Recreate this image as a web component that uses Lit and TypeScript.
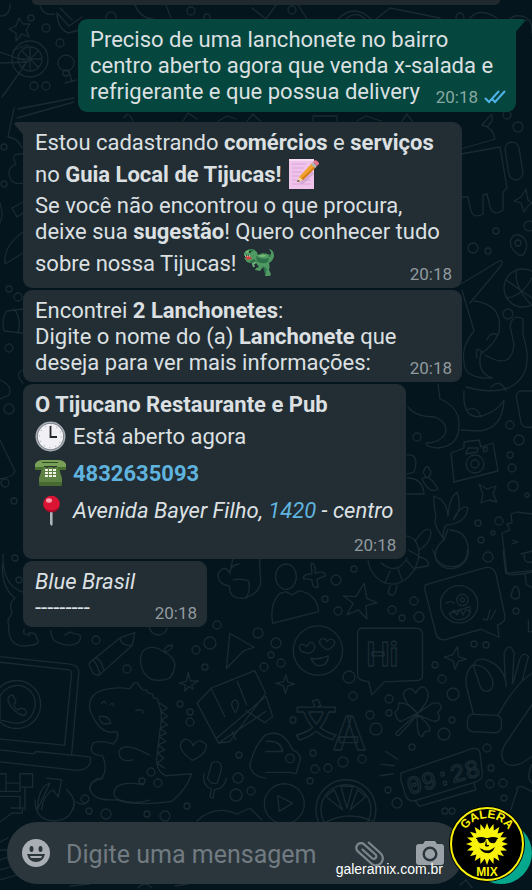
import { LitElement, html, css, svg } from "lit";
import { customElement } from "lit/decorators.js";

const memo = svg`<svg class="emoji" viewBox="0 0 31 31" role="img" aria-label="memo">
  <path fill="#f0c3ea" d="M1 1H26V31H1Z"/><path fill="#f8dcf5" d="M1 1H26V3H1Z"/>
  <path stroke="#d9a5da" stroke-width="1" d="M4 6H18M4 10H16M4 14H14M4 18H11M4 22H23M4 26H23" fill="none"/>
  <path fill="#ba8fbc" d="M11 25L24 13L26 16L15 26Z" opacity=".5"/>
  <path fill="#f0a02c" d="M11 19L24 5L28 9L15 22L10 24Z"/><path fill="#d37a15" d="M13 21L27 8L28 9L15 22Z"/>
  <path fill="#f5d7a8" d="M11 19L15 22L9 24Z"/><path fill="#3b2d28" d="M10 22L12 23L9 24Z"/>
  <path fill="#aeb4bd" d="M23 6L25 4L29 8L27 10Z"/><path fill="#e8738c" d="M25 4L27 2Q29 2 31 5L31 6L29 8Z"/></svg>`;

const dino = svg`<svg class="emoji" viewBox="0 0 31 31" role="img" aria-label="dinosaur">
  <path fill="#4f9a62" d="M1 6Q4 2 9 2Q14 3 15 8Q19 5 24 7Q29 9 28 5L26 2Q31 3 31 9Q30 14 26 16Q27 20 26 23L28 27L27 29H22L23 23L20 20L17 24L12 23L13 21L16 20L13 16Q8 17 4 15L1 11L7 10L5 8L1 9Z"/>
  <path fill="#2d7148" d="M13 9Q18 13 26 11L25 15Q19 18 14 14ZM20 19L24 22L22 27L21 24ZM6 3L9 2L11 4L8 5ZM6 15L11 12L14 15L9 16Z"/>
  <path fill="#7dbb7a" d="M15 9Q19 6 24 9L19 10ZM2 5L6 3L5 6Z"/>
  <path fill="#c8463f" d="M2 9L7 9L9 12L4 13Z"/><path stroke="#f3eee0" stroke-width="1" stroke-dasharray="1 1" d="M2 9H7" fill="none"/>
  <circle cx="7" cy="5" r="1" fill="#1c251d"/>
  <path stroke="#6fb07b" stroke-width="2" fill="none" d="M13 15L10 17L11 20"/>
  <path fill="#1f5c3a" d="M17 8l1-2 1 1zM21 7l2-2 1 2zM25 9l3-1-1 2z"/></svg>`;

const clock = svg`<svg class="emoji" viewBox="0 0 31 31" role="img" aria-label="clock">
  <circle cx="15.500" cy="15.500" r="15" fill="#a9afb6"/><circle cx="15.500" cy="15.500" r="13.500" fill="#75797f"/>
  <circle cx="15.500" cy="15.500" r="12.700" fill="#f0f0f5"/>
  <circle cx="15.500" cy="15.500" r="11" fill="none" stroke="#b9bac4" stroke-width="1.500" stroke-dasharray="1 4.760"/>
  <path d="M15.500 5V16H22" fill="none" stroke="#23262b" stroke-width="1.800"/></svg>`;

const phone = svg`<svg class="emoji" viewBox="0 0 31 31" role="img" aria-label="telephone">
  <path fill="#5d8142" d="M7 9H24Q25 15 27 20V26Q27 28 25 28H6Q4 28 4 26V20Q6 15 7 9Z"/>
  <path fill="#476a32" d="M4 24H27V26Q27 28 25 28H6Q4 28 4 26Z"/>
  <path fill="#78a057" d="M0 10V6Q2 2 8 2H23Q29 2 31 6V10Q31 12 29 12H23Q22 11 22 8H9Q9 11 8 12H2Q0 12 0 10Z"/>
  <path fill="#49702f" d="M0 9H9L8 12H2Q0 12 0 10ZM22 9H31V10Q31 12 29 12H23Z"/>
  <path fill="#314c25" d="M7 4H23V5H7ZM11 8H13V10H11ZM18 8H20V10H18Z"/>
  <path fill="#f0f2e4" d="M10 11h3v2h-3zM14 11h3v2h-3zM18 11h3v2h-3zM10 14h3v2h-3zM14 14h3v2h-3zM18 14h3v2h-3zM10 17h3v2h-3zM14 17h3v2h-3zM18 17h3v2h-3z"/></svg>`;

const pin = svg`<svg class="emoji" viewBox="0 0 31 31" role="img" aria-label="pin">
  <path fill="#aeb5bb" d="M15 15H18V29L16.500 31L15 29Z"/><path fill="#747b80" d="M17 15H18V29L17 30Z"/>
  <circle cx="16.500" cy="9" r="8.300" fill="#dc1433"/><path fill="#a50c27" d="M9 12Q16 19 24 12Q22 17.300 16.500 17.300Q11 17.300 9 12Z"/>
  <ellipse cx="14" cy="5.500" rx="3" ry="2.200" fill="#ff9cab"/></svg>`;

/* Rings and bubbles scattered between the larger doodles: x, y, radius. */
const rings: number[][] = [
  [31, 18, 3], [46, 28, 4], [60, 43, 4], [34, 86, 4], [46, 86, 4], [66, 73, 3], [111, 17, 5], [191, 11, 4], [207, 17, 3], [292, 10, 4], [460, 17, 4],
  [4, 147, 3], [4, 184, 3], [518, 127, 5], [507, 115, 4], [496, 231, 3], [473, 248, 5], [488, 251, 3], [529, 226, 5], [508, 314, 5],
  [9, 289, 3], [18, 297, 4], [9, 348, 4], [9, 409, 5], [5, 483, 4], [14, 501, 3], [15, 558, 3], [19, 580, 3],
  [417, 437, 4], [510, 425, 4], [519, 440, 5], [510, 455, 3], [512, 468, 4], [513, 486, 5], [527, 495, 2], [478, 523, 3], [499, 521, 4], [493, 533, 2], [481, 540, 3], [488, 557, 5],
  [354, 569, 3], [336, 580, 5], [325, 599, 3], [338, 611, 4], [414, 601, 4], [392, 610, 4], [402, 618, 3], [419, 617, 5], [516, 611, 3],
  [276, 643, 5], [271, 655, 3], [281, 663, 4], [474, 644, 3], [486, 645, 3], [435, 665, 3], [442, 679, 4], [453, 694, 6], [349, 677, 6], [353, 696, 4],
  [389, 699, 4], [389, 713, 3], [370, 715, 4], [376, 729, 6], [444, 734, 6], [293, 720, 3], [452, 720, 3], [412, 747, 3], [487, 748, 4],
  [313, 753, 3], [315, 769, 4], [328, 768, 4], [343, 762, 5], [362, 759, 4], [310, 781, 3], [397, 803, 5], [388, 790, 3], [491, 768, 3], [490, 784, 4], [503, 783, 4], [504, 798, 3],
  [96, 640, 4], [127, 669, 4], [217, 625, 4], [210, 643, 6], [196, 650, 4], [258, 633, 5], [205, 667, 3], [264, 667, 4],
  [180, 704, 3], [190, 712, 3], [190, 722, 4], [239, 755, 3], [238, 778, 5], [236, 795, 6], [251, 791, 4], [85, 799, 4], [187, 806, 3], [142, 781, 3], [151, 772, 4], [158, 783, 4],
  [89, 811, 3], [106, 814, 5], [147, 814, 3], [165, 816, 5], [445, 811, 3], [452, 811, 3],
];

const doodles = svg`<svg class="doodles" viewBox="0 0 532 890" preserveAspectRatio="xMidYMin slice" aria-hidden="true">
  ${rings.map(([x, y, r]) => svg`<circle cx=${x} cy=${y} r=${r}/>`)}
  <!-- upper left: star, wheel, cup, lollipop -->
  <path d="M19 18L23 24L30 24L26 30L29 37L22 34L16 41L16 33L9 29L16 26ZM57 13L69 26L82 17M60 8L72 20M57 13Q57 28 68 33L80 30M0 52L28 62L0 63M25 65L2 97M13 50L28 45"/>
  <circle cx="30" cy="59" r="18"/><circle cx="30" cy="59" r="12"/><path d="M30 48V70M19 59H41M22 51L38 67M38 51L22 67"/>
  <circle cx="66" cy="63" r="8"/><path d="M69 71L72 82M65 83L76 80M0 16Q10 16 10 4M40 6Q44 16 54 14M18 109L74 98M17 118L74 102"/>
  <path d="M14 108L8 137Q18 138 22 148M23 154Q9 153 16 164Q5 169 11 180Q15 185 23 183M23 202L12 208L17 217L23 213M0 223Q4 215 0 203M23 232Q3 246 5 264L23 253"/>
  <path d="M23 309L7 311Q1 318 4 331L23 333M14 309Q22 319 18 333M0 380Q13 385 9 395L0 399M0 440L15 471Q14 477 0 479M23 370Q14 374 23 383M3 554Q2 586 23 592"/>
  <!-- top edge -->
  <path d="M135 5Q140 18 153 19M164 0L171 18M252 8L266 19L276 5M298 5L307 19M338 19Q354 3 371 19M346 19Q356 10 365 19M376 19L390 8L440 18M470 18Q480 7 497 18M521 24Q532 12 532 33M510 19Q516 13 527 18"/>
  <path d="M124 118Q128 110 133 121M183 121L188 113L197 119M218 121L227 116L236 119M247 121L253 114L260 121M313 121V116H337V121M357 121L366 116L381 121M402 121L407 114L412 121"/>
  <!-- android, octopus, basketball, map pin -->
  <path d="M461 149L495 139Q493 127 482 125M482 125Q488 118 490 116Q493 112 492 121L487 127M461 154L500 147L507 188L503 192L503 210Q494 217 490 207L487 194L483 195L483 214Q472 220 470 207L468 197H461"/>
  <rect x="507" y="142" width="14" height="38" rx="7" transform="rotate(-9 514 161)"/>
  <path d="M526 189L528 200L532 203L528 206L524 212L521 203L514 201L521 197ZM519 255Q508 247 511 239Q516 231 524 238Q530 246 523 255Z"/>
  <circle cx="518" cy="243" r="3"/><circle cx="523" cy="288" r="19"/><path d="M506 280L532 298M507 298Q522 296 532 278M516 270Q515 290 532 305"/>
  <path d="M461 284L499 261Q505 259 500 267L470 303M462 290L474 331Q461 346 464 362Q464 379 491 378M474 301Q503 304 499 332Q493 347 481 353Q476 373 493 378M485 355Q512 371 514 344L510 326Q513 313 523 319V335Q535 372 512 386Q495 395 466 387M464 391Q462 420 482 416Q499 410 504 400Q503 428 480 431L461 430M491 387Q500 378 506 391M466 410Q477 405 481 417M487 340Q490 331 498 335M483 353Q474 344 477 358"/>
  <path d="M408 407Q416 417 435 417Q449 423 445 434Q440 443 426 443Q425 447 438 448Q460 446 459 424Q459 407 440 399L438 384M407 455Q420 454 414 472L407 474M407 478Q423 478 424 494H407"/>
  <path d="M532 391H520Q515 393 517 400L521 423Q524 429 532 427M423 473Q427 461 431 472Q428 482 424 474M422 479Q429 473 438 489Q430 495 422 479"/>
  <path d="M451 453L464 448L464 442L479 440L481 447L493 443L498 471L454 482Z"/><circle cx="475" cy="464" r="9"/><circle cx="475" cy="464" r="4"/><path d="M466 454L468 448L478 448L477 452ZM483 448L487 447V451L484 452Z"/>
  <path d="M479 484L487 489L496 486L493 494L497 502L489 500L481 503L483 494Z"/>
  <path d="M444 539Q432 523 436 518Q433 500 434 496Q447 500 448 516Q449 498 457 492Q463 509 453 520Q462 503 468 508Q466 524 446 525M443 539Q443 529 446 525M448 529L444 540Q433 548 436 560Q443 571 455 568Q470 563 468 547Q466 531 450 530"/>
  <path d="M532 514L517 512L511 514L512 523L507 524L510 530L502 533L507 574Q512 576 532 572M512 540L518 542L512 544M521 554L532 551M524 555Q524 564 532 562"/>
  <path d="M368 560Q370 576 385 583Q402 588 414 570Q424 552 414 539L407 536M381 563Q397 576 407 558M385 583L390 571M402 580L398 569M415 570L407 561M419 556L408 550M390 586L388 593Q395 600 397 585M416 540Q427 524 431 532Q431 543 419 550M419 557Q430 559 428 566L415 568"/>
  <!-- lower half, left -->
  <g transform="translate(0 550) scale(.333)" stroke-width="4">
    <path d="M8 40Q2 110 45 145Q24 160 36 190L24 210L27 248Q35 298 95 286Q125 280 110 265Q110 245 85 250M73 238Q65 255 90 256M152 240Q155 275 175 278Q215 295 238 275Q250 250 222 252Q212 240 195 256"/>
    <path d="M270 350Q265 340 272 336L360 264L405 248L397 286L302 372Q290 380 278 368ZM360 264Q365 290 397 286M288 325Q300 325 312 360M280 332Q290 340 300 370"/>
    <path d="M448 230Q450 250 475 256Q500 250 502 235M490 305Q455 280 428 305Q415 330 430 365Q455 405 510 385Q535 350 518 325Q505 310 490 305ZM493 305Q495 285 518 286Q515 305 493 305Z"/>
    <path d="M565 368L572 394L596 393L576 406L580 418L567 410L555 424L556 405L538 400L560 394ZM690 250L763 292L730 304L680 356ZM592 460L634 415L765 362L798 430L690 575L656 580ZM634 415L675 500M713 395L740 465M656 580L798 485M650 565L798 440M738 482L798 520M697 546L708 570"/>
    <path d="M708 488Q685 460 705 450Q725 455 708 488Z"/>
    <path d="M0 320L205 342Q235 345 237 365L215 615L272 622Q275 660 230 662L0 636M0 337L210 360Q217 370 214 380L194 586L0 568M0 600L100 612L108 605L215 616"/>
    <circle cx="50" cy="464" r="72"/><path d="M0 438Q22 402 65 407Q110 425 105 470Q95 522 42 520L0 510Z"/>
    <path d="M38 435Q15 440 30 465Q45 490 70 497Q85 493 75 478L62 475L55 480Q42 475 42 463L48 455Z"/>
    <path d="M270 480Q262 435 310 420Q350 410 390 417L400 402Q412 393 418 407L428 420L440 420L444 430L458 432L460 443L474 448L476 460Q490 490 482 530L470 630Q472 670 500 678L576 672Q560 720 515 755Q410 770 350 750Q275 755 270 715Q275 685 305 685Q325 660 308 618Q260 615 280 580Q305 570 340 583Q360 560 350 545Q300 560 270 480ZM480 460L502 475L484 485L503 500L484 510L503 525L481 535L500 550L478 560L498 575L475 585L495 600L473 610L492 625L472 640L494 655"/>
    <path d="M450 616Q365 570 357 608Q360 640 400 630M305 460Q315 450 317 460M330 465Q340 455 340 469M298 500Q325 495 333 520Q300 530 298 500ZM408 482Q430 475 430 490M310 685Q265 695 270 720M430 705Q345 690 342 730Q342 750 380 758"/>
    <path d="M577 632Q520 590 555 568Q575 570 580 588Q595 560 620 585Q620 615 577 632ZM636 640Q665 625 665 660L652 700Q630 705 623 685ZM613 670Q605 705 635 718L630 742L640 745L644 720Q675 715 680 685M798 555Q765 585 750 645Q755 680 798 685"/>
    <path d="M60 672H98V712H60ZM0 672H18V725H0M18 700H60V725H0M75 712V780M0 740H60V780M140 685L185 690L175 742L160 720Q130 735 125 780M112 780Q115 710 150 700ZM200 720Q230 745 220 780"/>
    <path d="M654 72Q675 40 690 70Q690 45 718 42M654 72Q655 105 690 108Q685 145 730 145Q790 130 782 80L778 0M690 70L705 0M700 90Q720 85 745 92Q755 110 740 145"/>
  </g>
  <!-- lower half, right -->
  <g transform="translate(266 550) scale(.333)" stroke-width="4">
    <ellipse cx="60" cy="80" rx="31" ry="38"/><path d="M60 125L42 130Q10 160 20 220L158 185Q155 135 100 122L78 135Z"/>
    <path d="M135 40Q150 38 148 70Q180 60 178 78L152 88L157 110Q140 120 138 90L112 85Q112 72 138 72ZM295 100L303 145L333 158L300 168L303 207L278 180L243 195L262 160L232 138L270 140Z"/>
    <circle cx="156" cy="302" r="74"/><path d="M130 310Q100 310 100 290Q105 275 122 290Q135 265 147 290Q145 305 130 310ZM185 300Q155 285 162 270Q178 260 183 275Q195 260 207 275Q205 290 185 300ZM135 325Q160 330 187 318Q185 350 155 347Q140 340 135 325Z"/>
    <path d="M290 235H450Q470 235 470 255V375Q470 392 450 392L355 396L318 435L308 395Q275 392 275 375V250Q275 235 290 235Z"/>
    <text x="302" y="347" font-size="98" font-weight="700">Hi</text>
    <path d="M478 105L650 55Q680 45 690 70L718 200Q718 220 695 225L700 262L645 238L535 270Q515 270 510 250L477 120Z"/>
    <circle cx="580" cy="163" r="56"/><circle cx="590" cy="150" r="17"/><circle cx="590" cy="150" r="6"/>
    <path d="M540 160Q555 150 565 160M550 190L612 170Q620 205 580 210Q560 210 550 190ZM555 190L565 180L573 195L583 178L592 195L600 178L612 185M653 208L665 210L673 180M675 208L690 180M735 140Q745 95 757 115Q770 150 745 147Z"/>
    <path d="M712 0L720 70L798 62M778 72L782 105L798 112M502 0Q510 50 560 50Q605 45 605 0M575 290L578 320L602 328L578 334L568 358L562 333L535 322L560 315ZM60 375L65 396L85 402L66 408L58 430L52 408L30 400L52 396Z"/>
    <path d="M622 345Q595 365 602 410L622 490M622 345Q640 310 690 345Q720 370 722 410M622 345L640 400Q650 435 675 420Q690 400 670 370Q655 345 622 345ZM718 385L715 310Q730 270 745 310L740 400M742 400L760 335Q770 300 788 320L770 390M697 495Q750 400 798 370"/>
    <rect x="605" y="495" width="102" height="52" rx="17" transform="rotate(3 656 520)"/><path d="M798 465L720 580Q695 620 722 642Q750 658 798 620M798 645Q780 680 798 700M788 210V245H798"/>
    <path d="M455 490Q405 450 415 425Q435 405 450 430Q470 395 485 425Q495 450 455 490L500 460Q525 455 527 475L515 488Q530 510 505 515L455 495Q500 530 490 545Q475 540 470 560Q450 560 455 495ZM455 490L392 547Q385 555 398 558L455 495ZM455 490Q425 455 398 460Q400 480 388 487Q390 510 405 515Z"/>
    <text x="88" y="560" font-size="125" class="cjk">文</text><text x="203" y="602" font-size="142" font-weight="700">A</text>
    <path d="M0 555Q50 535 80 600Q105 610 103 630L90 672L75 668H0M0 575Q45 570 50 605H0M0 440L20 500L0 515"/><circle cx="72" cy="626" r="13"/>
    <path d="M360 605L395 628M345 643L385 648M343 678L383 672"/>
    <path d="M405 670L615 598Q640 590 643 612L650 675Q650 690 630 696L450 752Q430 758 420 740L405 690ZM450 755L460 770L630 720L625 700"/>
    <text x="430" y="735" font-size="75" class="digits" transform="rotate(-15 430 735)">09:28</text>
    <circle cx="55" cy="762" r="60"/><path d="M35 738L80 760L40 785Z"/><circle cx="240" cy="780" r="90"/><circle cx="240" cy="780" r="75"/>
    <path d="M225 710H260L243 775ZM275 720L300 740L253 780ZM205 720L180 740L230 780ZM735 780L755 720Q750 710 768 710L798 725"/>
  </g>
  <!-- around the message field -->
  <path d="M0 822L12 813L22 813L23 808H11M35 800Q35 820 54 821Q74 820 74 800M76 802Q84 807 88 801M120 800Q135 805 150 800M197 821Q214 804 237 814L250 808L262 820M0 842L8 838M0 850H8M0 860L8 857M0 870L10 867M0 880L20 874M70 886L90 884M138 888Q145 880 152 888M175 886L188 884M326 822Q350 810 374 822M460 885L466 880L472 888"/>
</svg>`;

const rays = Array.from({ length: 40 }, (_, i) => {
  const a = (i * Math.PI) / 20 - Math.PI / 2;
  const r = i % 2 ? 15 : 21;
  return `${(38 + r * Math.cos(a)).toFixed(1)},${(38 + r * Math.sin(a)).toFixed(1)}`;
}).join(" ");

const logo = svg`<svg class="logo" viewBox="0 0 76 76" role="img" aria-label="Galera Mix">
  <circle cx="38" cy="38" r="38" fill="#000"/><circle cx="38" cy="38" r="36" fill="#000" stroke="#f8f10a" stroke-width="2"/>
  <polygon points=${rays} fill="#f8f10a"/>
  <path fill="#000" d="M27 32Q32 30 37 32H39Q44 30 49 32V33H48Q47 38 43 37Q40 37 39 33H37Q36 37 33 37Q29 38 28 33H27ZM37 34L36 40Q38 41 40 40L40 39H38ZM30 41Q31 43 33 43Q38 46 43 43L46 41Q43 48 38 47Q33 47 30 41Z"/>
  <path id="arc" d="M14 29A25.500 25.500 0 0 1 62 29" fill="none"/>
  <text font-size="12"><textPath href="#arc" startOffset="50%" text-anchor="middle">GALERA</textPath></text>
  <text x="38" y="70" font-size="12" text-anchor="middle">MIX</text></svg>`;

@customElement("app-root")
export class AppRoot extends LitElement {
  static styles = css`
    :host { display: block; font: 22px/26px Roboto, "Noto Sans", sans-serif; color: #dce0e2; }
    .chat { position: relative; display: flex; flex-direction: column; min-height: 100vh; overflow: hidden; background: #04151e; }
    .doodles { position: absolute; inset: 0; width: 100%; height: 100%; fill: none; stroke: #1a2a32; stroke-width: 1.3; stroke-linejoin: round; stroke-linecap: round; }
    .doodles text { font-family: Roboto, sans-serif; }
    .doodles .digits { font-family: "Liberation Mono", monospace; }
    .doodles .cjk { font-family: "Noto Sans CJK SC", sans-serif; font-weight: 700; }
    .log { position: relative; display: flex; flex-direction: column; align-items: flex-start; gap: 2px; margin: 0; padding: 0 16px 0 23px; }
    .previous { align-self: stretch; height: 5px; margin: 0 16px 12px 9px; border-radius: 0 0 8px 8px; background: #20292e; }
    .bubble { position: relative; display: grid; box-sizing: border-box; max-width: 439px; padding: 8px 10px 6px 12px; border-radius: 9px; background: #222d34; }
    .text, .info, time, .meta { grid-area: 1 / 1; }
    .text { margin: 0; }
    .received { border-top-left-radius: 0; }
    .sent { align-self: flex-end; max-width: 438px; margin-bottom: 8px; padding: 8px 10px 7px 12px; border-top-right-radius: 0; background: #05463e; }
    .tail { position: absolute; top: 0; width: 10px; height: 14px; }
    .tail.left { left: -9px; fill: #222d34; }
    .tail.right { right: -9px; fill: #05463e; }
    time, .meta { align-self: end; justify-self: end; font-size: 17px; line-height: 16px; color: #919a9f; }
    time { display: block; }
    .meta { display: flex; align-items: center; gap: 6px; }
    .sent time { color: #8aa9a4; }
    .ticks { width: 22px; height: 14px; fill: none; stroke: #4fb3e8; stroke-width: 2; }
    .line { display: flex; align-items: center; gap: 7px; min-height: 26px; }
    .tall { min-height: 37px; }
    .info { padding-right: 13px; padding-bottom: 30px; }
    .bubble.place { padding-right: 0; padding-bottom: 0; }
    .place time { margin: 0 10px 6px 0; }
    .short { width: 184px; }
    .emoji { width: 31px; height: 31px; flex: none; }
    .text > .emoji { margin: 2px 1px 4px; vertical-align: -11px; }
    a { color: #5fb4df; text-decoration: none; }
    .composer { position: relative; display: flex; align-items: center; gap: 6px; margin: auto 0 0; padding: 16px 0 6px 7px; }
    .field { flex: 1; min-width: 0; box-sizing: border-box; display: flex; align-items: center; height: 62px; padding: 0 20px 0 14px; border-radius: 31px; background: #2b363c; }
    button { display: block; flex: none; margin: 0; padding: 0; border: 0; background: none; color: #9ba2a7; }
    button svg { display: block; }
    input { flex: 1; min-width: 0; margin: 0 8px 0 15px; padding: 3px 0 0; border: 0; outline: 0; background: none; font: 25px/30px Roboto, sans-serif; color: #dce0e2; }
    input::placeholder { color: #717b81; opacity: 1; }
    .clip { margin-right: 31px; color: #7b858b; }
    .voice { width: 62px; height: 62px; border-radius: 31px; background: #05a88d; }
    .logo { position: absolute; right: 7px; bottom: 8px; width: 76px; height: 76px; }
    .logo text { font-family: "Liberation Sans", sans-serif; font-weight: 700; fill: #f8f10a; }
    .site { position: absolute; right: 89px; bottom: 12px; font: 14px/18px "Liberation Sans", sans-serif; color: #fff; }
  `;

  private time() {
    return html`<time>20:18</time>`;
  }

  render() {
    return html`<main class="chat">
      ${doodles}
      <section class="log" aria-label="Conversa">
        <div class="previous"></div>
        <article class="bubble sent">
          <svg class="tail right" viewBox="0 0 10 14"><path d="M0 0H8Q11 1 9 3L0 14Z"/></svg>
          <p class="text">Preciso de uma lanchonete no bairro centro aberto agora que venda x-salada e refrigerante e que possua delivery</p>
          <div class="meta"><time>20:18</time><svg class="ticks" viewBox="0 0 22 14"><path d="M1 8L5 12L15 1M8 9L11 12L21 1"/></svg></div>
        </article>
        <article class="bubble received">
          <svg class="tail left" viewBox="0 0 10 14"><path d="M10 0H2Q-1 1 1 3L10 14Z"/></svg>
          <p class="text">Estou cadastrando <b>comércios</b> e <b>serviços</b> no <b>Guia Local de Tijucas!</b> ${memo}<br>Se você não encontrou o que procura, deixe sua <b>sugestão</b>! Quero conhecer tudo sobre nossa Tijucas! ${dino}</p>
          ${this.time()}
        </article>
        <article class="bubble">
          <p class="text">Encontrei <b>2 Lanchonetes</b>:<br>Digite o nome do (a) <b>Lanchonete</b> que deseja para ver mais informações:</p>
          ${this.time()}
        </article>
        <article class="bubble place">
          <div class="info">
            <div class="line"><b>O Tijucano Restaurante e Pub</b></div>
            <div class="line tall">${clock}<span>Está aberto agora</span></div>
            <div class="line tall">${phone}<a href="tel:4832635093"><b>4832635093</b></a></div>
            <div class="line tall">${pin}<i>Avenida Bayer Filho, <a href="tel:1420">1420</a> - centro</i></div>
          </div>
          ${this.time()}
        </article>
        <article class="bubble short">
          <p class="text"><i>Blue Brasil</i><br>---------</p>
          ${this.time()}
        </article>
      </section>
      <form class="composer" @submit=${(e: Event) => e.preventDefault()}>
        <div class="field">
          <button type="button" aria-label="Emoji"><svg width="30" height="30" viewBox="0 0 30 30"><circle cx="15" cy="15" r="14" fill="#a9afb4"/><g fill="#2b363c"><ellipse cx="10.500" cy="11" rx="2" ry="3"/><ellipse cx="19.500" cy="11" rx="2" ry="3"/><path d="M6 16H24Q22 24 15 24Q8 24 6 16Z"/></g><path d="M9 18H21L20 20H10Z" fill="#a9afb4"/></svg></button>
          <input type="text" aria-label="Mensagem" placeholder="Digite uma mensagem">
          <button class="clip" type="button" aria-label="Anexar"><svg width="30" height="30" viewBox="0 0 30 30" fill="currentColor"><path transform="translate(15 15) rotate(-48) scale(1.450) translate(-12.500 -12)" d="M16.500 6v11.500c0 2.210-1.790 4-4 4s-4-1.790-4-4V5c0-1.380 1.120-2.500 2.500-2.500s2.500 1.120 2.500 2.500v10.500c0 .550-.450 1-1 1s-1-.450-1-1V6H10v9.500c0 1.380 1.120 2.500 2.500 2.500s2.500-1.120 2.500-2.500V5c0-2.210-1.790-4-4-4S7 2.790 7 5v12.500c0 3.040 2.460 5.500 5.500 5.500s5.500-2.460 5.500-5.500V6h-1.500z"/></svg></button>
          <button type="button" aria-label="Câmera"><svg width="28" height="28" viewBox="0 0 28 28"><path d="M9 2H19L21 5H25Q28 5 28 8V23Q28 26 25 26H3Q0 26 0 23V8Q0 5 3 5H7Z" fill="#9ba2a7"/><circle cx="14" cy="15" r="6.300" fill="none" stroke="#2b363c" stroke-width="2.400"/></svg></button>
        </div>
        <button class="voice" type="button" aria-label="Gravar áudio"></button>
        <span class="site">galeramix.com.br</span>
        ${logo}
      </form>
    </main>`;
  }
}
